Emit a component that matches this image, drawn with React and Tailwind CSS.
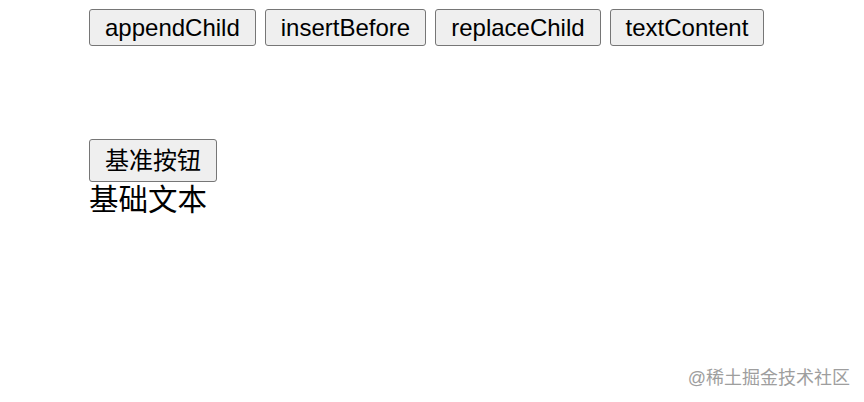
import React from 'react';

const btn =
  "h-[37px] px-[15px] border border-[#767676] rounded-[3px] bg-[#efefef] text-[24px] leading-none text-black font-['Liberation_Sans',Arial,sans-serif]";

export default function App() {
  const ops = ['appendChild', 'insertBefore', 'replaceChild', 'textContent'];
  return (
    <div className="relative w-[864px] h-[402px] bg-white overflow-hidden font-['Liberation_Sans','Noto_Sans_CJK_SC',sans-serif]">
      <div className="pl-[89px] pt-[9px]">
        {/* operation buttons */}
        <div className="flex gap-[9px]">
          {ops.map((op) => (
            <button key={op} className={btn}>
              {op}
            </button>
          ))}
        </div>

        <div className="mt-[93px] flex flex-col items-start">
          <button className="h-[43px] px-[15px] border border-[#767676] rounded-[3px] bg-[#efefef] text-[24px] leading-none text-black font-['Liberation_Sans','Noto_Sans_CJK_SC',sans-serif]">
            基准按钮
          </button>
          <div className="text-[29.5px] leading-[36px] text-black">基础文本</div>
        </div>
      </div>

      {/* watermark */}
      <div className="absolute right-[14px] bottom-[12px] text-[18px] leading-[24px] text-[#9e9e9e]">
        @稀土掘金技术社区
      </div>
    </div>
  );
}
